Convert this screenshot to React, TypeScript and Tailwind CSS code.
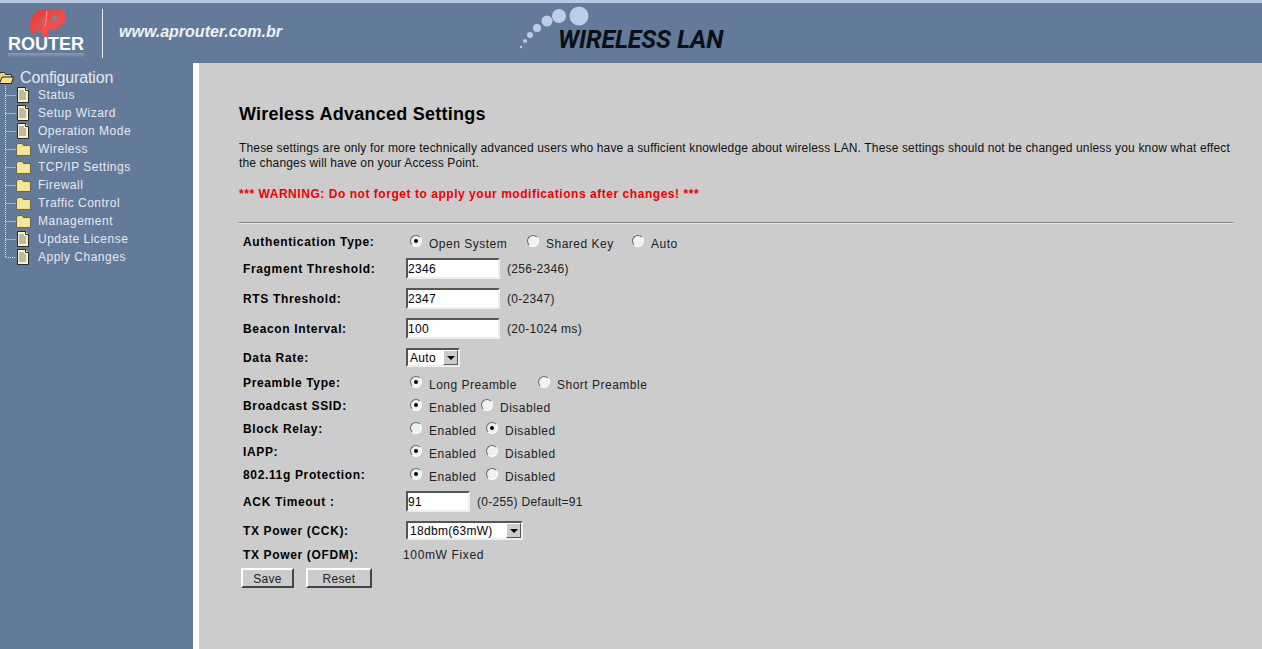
import React from 'react';

const treeItems = [
  { label: 'Status', icon: 'page' },
  { label: 'Setup Wizard', icon: 'page' },
  { label: 'Operation Mode', icon: 'page' },
  { label: 'Wireless', icon: 'folder' },
  { label: 'TCP/IP Settings', icon: 'folder' },
  { label: 'Firewall', icon: 'folder' },
  { label: 'Traffic Control', icon: 'folder' },
  { label: 'Management', icon: 'folder' },
  { label: 'Update License', icon: 'page' },
  { label: 'Apply Changes', icon: 'page' },
];

const PageIcon = () => (
  <svg width="14" height="16" viewBox="0 0 14 16" className="shrink-0">
    <path d="M1.5 .5H9.5L12.5 3.5V15.5H1.5Z" fill="#f6f1cf" stroke="#2a2a22" />
    <path d="M9.5 .5V3.5H12.5" fill="#fff" stroke="#2a2a22" />
    <path d="M3 4H8M3 6H10M3 8H10M3 10H10M3 12H10" stroke="#8a8468" />
  </svg>
);

const FolderIcon = () => (
  <svg width="15" height="13" viewBox="0 0 15 13" className="shrink-0">
    <path d="M.5 2.5L2 .5H6L7.5 2.5H14.5V12.5H.5Z" fill="#f7e27e" stroke="#6b6844" />
    <path d="M2 4H13V11H2Z" fill="#f6e6a0" />
  </svg>
);

const OpenFolderIcon = () => (
  <svg width="15" height="13" viewBox="0 0 15 13" className="-ml-[1px] shrink-0">
    <path d="M.5 2.5L1.5 .5H5.5L6.5 2.5H12.5V11.5H.5Z" fill="#f3dc80" stroke="#333" />
    <path d="M.5 11.5L3 5H14.5L12.5 11.5Z" fill="#f7e08a" stroke="#222" />
  </svg>
);

function Connector({ last }: { last: boolean }) {
  return (
    <svg width="11" height="18" viewBox="0 0 11 18" className="shrink-0">
      <path d={last ? 'M.5 0V9.5H11' : 'M.5 0V18M.5 9.5H11'} stroke="#e6eaf0" strokeDasharray="1 1" fill="none" />
    </svg>
  );
}

const Sidebar = () => (
  <div className="w-[193px] shrink-0 bg-[#647a99]">
    <div className="flex h-[23px] items-center pt-[7px]">
      <OpenFolderIcon />
      <span className="ml-[6px] text-[16px] tracking-[-0.15px] text-[#e4e9f0]">Configuration</span>
    </div>
    <div className="ml-[5px]">
      {treeItems.map((item, i) => (
        <div key={item.label} className="flex h-[18px] items-center">
          <Connector last={i === treeItems.length - 1} />
          <div className="flex w-[22px] shrink-0">{item.icon === 'page' ? <PageIcon /> : <FolderIcon />}</div>
          <span className="text-[12px] tracking-[0.5px] text-[#e4e9f0]">{item.label}</span>
        </div>
      ))}
    </div>
  </div>
);

const Header = () => (
  <div className="flex h-[60px] items-center bg-[#647a99]">
    <div className="ml-[8px] flex w-[76px] flex-col items-center">
      <svg width="38" height="31" viewBox="0 0 38 31" className="-mb-[4px]">
        <defs>
          <linearGradient id="apRed" x1="0" y1="0" x2="1" y2="1">
            <stop offset="0" stopColor="#e2383a" />
            <stop offset="0.6" stopColor="#f0504c" />
            <stop offset="1" stopColor="#e4403f" />
          </linearGradient>
        </defs>
        <path d="M2 18C3 10 8 1 14 .5L36 .5C40 5 40 12 34 17C30 20 25 21 21 21L22 29L16 27C14 24 12 22 10 20L6 26Z" fill="url(#apRed)" />
        <path d="M13 14L17 8V14Z" fill="#8a7a8c" />
        <path d="M25 7H31L30 12L24 13Z" fill="#8a7a8c" />
        <path d="M20 2L18 18" stroke="#ff8a80" strokeWidth="1.2" />
      </svg>
      <span className="text-[18px] leading-[17px] font-bold text-white">ROUTER</span>
      <div className="h-[5px] w-[76px] bg-gradient-to-b from-white/25 to-transparent" />
    </div>
    <div className="ml-[18px] h-[49px] w-px bg-[#e8edf3]" />
    <span className="ml-[16px] -mt-[2px] text-[16px] font-bold italic text-[#edf0f4]">www.aprouter.com.br</span>
    <div className="ml-[238px] flex -mt-[4px] items-end">
      <svg width="76" height="50" viewBox="0 0 76 50" className="shrink-0">
        <circle cx="1" cy="41" r="1.2" fill="#bccde9" />
        <circle cx="5" cy="35" r="2" fill="#bccde9" />
        <circle cx="10" cy="29" r="3" fill="#bccde9" />
        <circle cx="17" cy="22" r="4" fill="#bccde9" />
        <circle cx="27" cy="15" r="5.5" fill="#bccde9" />
        <circle cx="39" cy="10" r="7" fill="#bccde9" />
        <circle cx="59" cy="10" r="9.5" fill="#bccde9" />
      </svg>
      <span className="-mb-[1px] -ml-[38px] font-['Roboto',sans-serif] text-[25px] leading-[34px] font-bold italic tracking-[-0.15px] text-[#0a0f18]">WIRELESS LAN</span>
    </div>
  </div>
);

function Radio({ checked }: { checked?: boolean }) {
  return (
    <span className="flex h-[12px] w-[12px] shrink-0 items-center justify-center rounded-full border border-t-[#666] border-l-[#666] border-r-white border-b-white bg-[#f0f0f0]">
      {checked && <span className="h-[4px] w-[4px] rounded-full bg-black" />}
    </span>
  );
}

function RadioOption({ label, checked, className }: { label: string; checked?: boolean; className: string }) {
  return (
    <span className={`flex items-center ${className}`}>
      <span className="-mt-[2px]"><Radio checked={checked} /></span>
      <span className="mt-[4px] ml-[7px] tracking-[0.5px]">{label}</span>
    </span>
  );
}

function TextBox({ value, width }: { value: string; width: string }) {
  return (
    <input
      readOnly
      value={value}
      className={`${width} h-[21px] border-2 border-t-[#555] border-l-[#555] border-r-[#eee] border-b-[#eee] bg-white pl-[0px] text-[12px] text-black outline-none`}
    />
  );
}

function SelectBox({ value, width }: { value: string; width: string }) {
  return (
    <div className={`${width} flex h-[19px] items-center justify-between border-2 border-t-[#555] border-l-[#555] border-r-[#eee] border-b-[#eee] bg-white`}>
      <span className="pl-[2px] text-[12px] text-black">{value}</span>
      <span className="flex h-[15px] w-[15px] items-center justify-center border border-t-white border-l-white border-r-[#555] border-b-[#555] bg-[#ccc]">
        <span className="h-0 w-0 border-x-[4px] border-t-[4px] border-x-transparent border-t-black" />
      </span>
    </div>
  );
}

// rows are as tall as the step to the next one, the content sits in a 21px line at the top
function Row({ label, height, children }: { label: string; height: string; children: React.ReactNode }) {
  return (
    <div className={height}>
      <div className="flex h-[21px] items-center">
        <span className="w-[167px] shrink-0 pl-[4px] text-[12px] font-bold tracking-[0.65px] text-black">{label}</span>
        {children}
      </div>
    </div>
  );
}

function BevelButton({ label, width }: { label: string; width: string }) {
  return (
    <button className={`${width} h-[20px] border-2 border-t-white border-l-white border-r-[#444] border-b-[#444] bg-[#ccc] text-[12px] text-[#222]`}>
      {label}
    </button>
  );
}

const Form = () => (
  <div className="text-[12px] tracking-[0.3px] text-[#222]">
    <Row label="Authentication Type:" height="h-[27px]">
      <RadioOption label="Open System" checked className="ml-[4px] w-[117px]" />
      <RadioOption label="Shared Key" className="w-[105px]" />
      <RadioOption label="Auto" className="w-[50px]" />
    </Row>
    <Row label="Fragment Threshold:" height="h-[30px]">
      <TextBox value="2346" width="w-[94px]" />
      <span className="ml-[7px]">(256-2346)</span>
    </Row>
    <Row label="RTS Threshold:" height="h-[30px]">
      <TextBox value="2347" width="w-[94px]" />
      <span className="ml-[7px]">(0-2347)</span>
    </Row>
    <Row label="Beacon Interval:" height="h-[29px]">
      <TextBox value="100" width="w-[94px]" />
      <span className="ml-[7px]">(20-1024 ms)</span>
    </Row>
    <Row label="Data Rate:" height="h-[25px]">
      <SelectBox value="Auto" width="w-[54px]" />
    </Row>
    <Row label="Preamble Type:" height="h-[23px]">
      <RadioOption label="Long Preamble" checked className="ml-[4px] w-[128px]" />
      <RadioOption label="Short Preamble" className="w-[120px]" />
    </Row>
    <Row label="Broadcast SSID:" height="h-[23px]">
      <RadioOption label="Enabled" checked className="ml-[4px] w-[71px]" />
      <RadioOption label="Disabled" className="w-[80px]" />
    </Row>
    <Row label="Block Relay:" height="h-[23px]">
      <RadioOption label="Enabled" className="ml-[4px] w-[76px]" />
      <RadioOption label="Disabled" checked className="w-[80px]" />
    </Row>
    <Row label="IAPP:" height="h-[23px]">
      <RadioOption label="Enabled" checked className="ml-[4px] w-[76px]" />
      <RadioOption label="Disabled" className="w-[80px]" />
    </Row>
    <Row label="802.11g Protection:" height="h-[27px]">
      <RadioOption label="Enabled" checked className="ml-[4px] w-[76px]" />
      <RadioOption label="Disabled" className="w-[80px]" />
    </Row>
    <Row label="ACK Timeout :" height="h-[29px]">
      <TextBox value="91" width="w-[64px]" />
      <span className="ml-[7px]">(0-255) Default=91</span>
    </Row>
    <Row label="TX Power (CCK):" height="h-[24px]">
      <SelectBox value="18dbm(63mW)" width="w-[117px]" />
    </Row>
    <Row label="TX Power (OFDM):" height="h-[24px]">
      <span className="-ml-[3px] tracking-[0.65px]">100mW Fixed</span>
    </Row>
    <div className="flex gap-[12px] pl-[2px]">
      <BevelButton label="Save" width="w-[53px]" />
      <BevelButton label="Reset" width="w-[66px]" />
    </div>
  </div>
);

export default function App() {
  return (
    <div className="h-[649px] w-[1262px] overflow-hidden bg-[#cccccc] font-['Liberation_Sans',Arial,sans-serif]">
      <div className="h-[3px] bg-[#b8c9e2]" />
      <Header />
      <div className="flex h-[586px]">
        <Sidebar />
        <div className="w-[6px] shrink-0 bg-white" />
        <div className="flex-1 pl-[40px] pr-[29px] pt-[39px]">
          <h1 className="text-[18px] leading-[24px] font-bold tracking-[0.25px] text-black">Wireless Advanced Settings</h1>
          <p className="mt-[15px] text-[12px] leading-[15px] tracking-[0.15px] text-[#111]">
            These settings are only for more technically advanced users who have a sufficient knowledge about wireless LAN. These settings should not be changed unless you know what effect the changes will have on your Access Point.
          </p>
          <p className="mt-[14px] text-[12px] font-bold tracking-[0.54px] text-[#f00000]">*** WARNING: Do not forget to apply your modifications after changes! ***</p>
          <div className="mt-[19px] mb-[7px] h-[2px] border-t border-b border-t-[#808080] border-b-[#e8e8e8]" />
          <Form />
        </div>
      </div>
    </div>
  );
}
